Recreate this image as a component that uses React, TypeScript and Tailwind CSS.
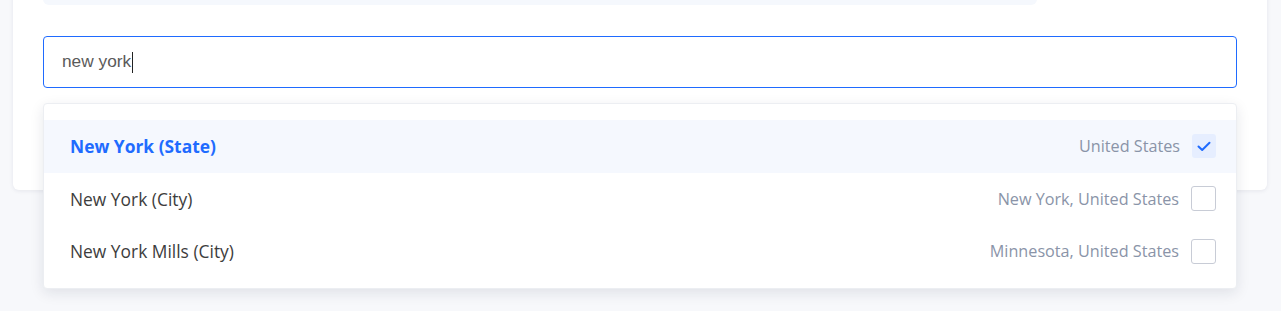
import React from "react";

const rows = [
  { name: "New York (State)", sub: "United States", checked: true },
  { name: "New York (City)", sub: "New York, United States", checked: false },
  { name: "New York Mills (City)", sub: "Minnesota, United States", checked: false },
];

export default function App() {
  return (
    <div className="min-h-[311px] w-full overflow-hidden bg-[#f7f8fb] pl-[13px] pr-[14px]" style={{ fontFamily: '"Open Sans", sans-serif' }}>
      <div className="relative -mt-[40px] h-[230px] rounded-md bg-white px-[30px] shadow-[0_1px_4px_rgba(20,30,60,0.08)]">
        <div className="h-[45px] w-[994px] rounded-md bg-[#f5f8fd]" />
        <div className="mt-[31px] flex h-[52px] items-center rounded-[4px] border border-[#1f6bff] px-[18px]">
          <span className="text-[17.3px] text-[#5a5a5a]" style={{ fontFamily: '"Liberation Sans", Arial, sans-serif' }}>new york</span>
          <span className="ml-[1px] h-[21px] w-[1px] bg-[#222]" />
        </div>
        <div className="absolute left-[30px] right-[30px] top-[143px] rounded-[4px] border border-[#eceef2] bg-white pt-[16px] pb-[10px] shadow-[0_4px_14px_rgba(20,30,60,0.10)]">
          {rows.map((r) => (
            <div
              key={r.name}
              className={`flex h-[52.5px] items-center pl-[26px] pr-[20px] ${r.checked ? "bg-[#f5f8fe]" : ""}`}
            >
              <span className={`flex-1 text-[17.4px] ${r.checked ? "font-bold text-[#1f6bff]" : "text-[#3d3d3d]"}`}>{r.name}</span>
              <span className="text-[16.2px] text-[#8a94a8]">{r.sub}</span>
              {r.checked ? (
                <span className="ml-[12px] flex h-[24px] w-[24px] items-center justify-center rounded-[3px] bg-[#e6eeff]">
                  <svg width="14" height="11" viewBox="0 0 14 11" fill="none">
                    <path d="M1.5 5.5 L5.2 9 L12.5 1.8" stroke="#1f6bff" strokeWidth="2" strokeLinecap="round" strokeLinejoin="round" />
                  </svg>
                </span>
              ) : (
                <span className="ml-[12px] h-[25px] w-[25px] rounded-[3px] border border-[#c8ccd6] bg-white" />
              )}
            </div>
          ))}
        </div>
      </div>
    </div>
  );
}
